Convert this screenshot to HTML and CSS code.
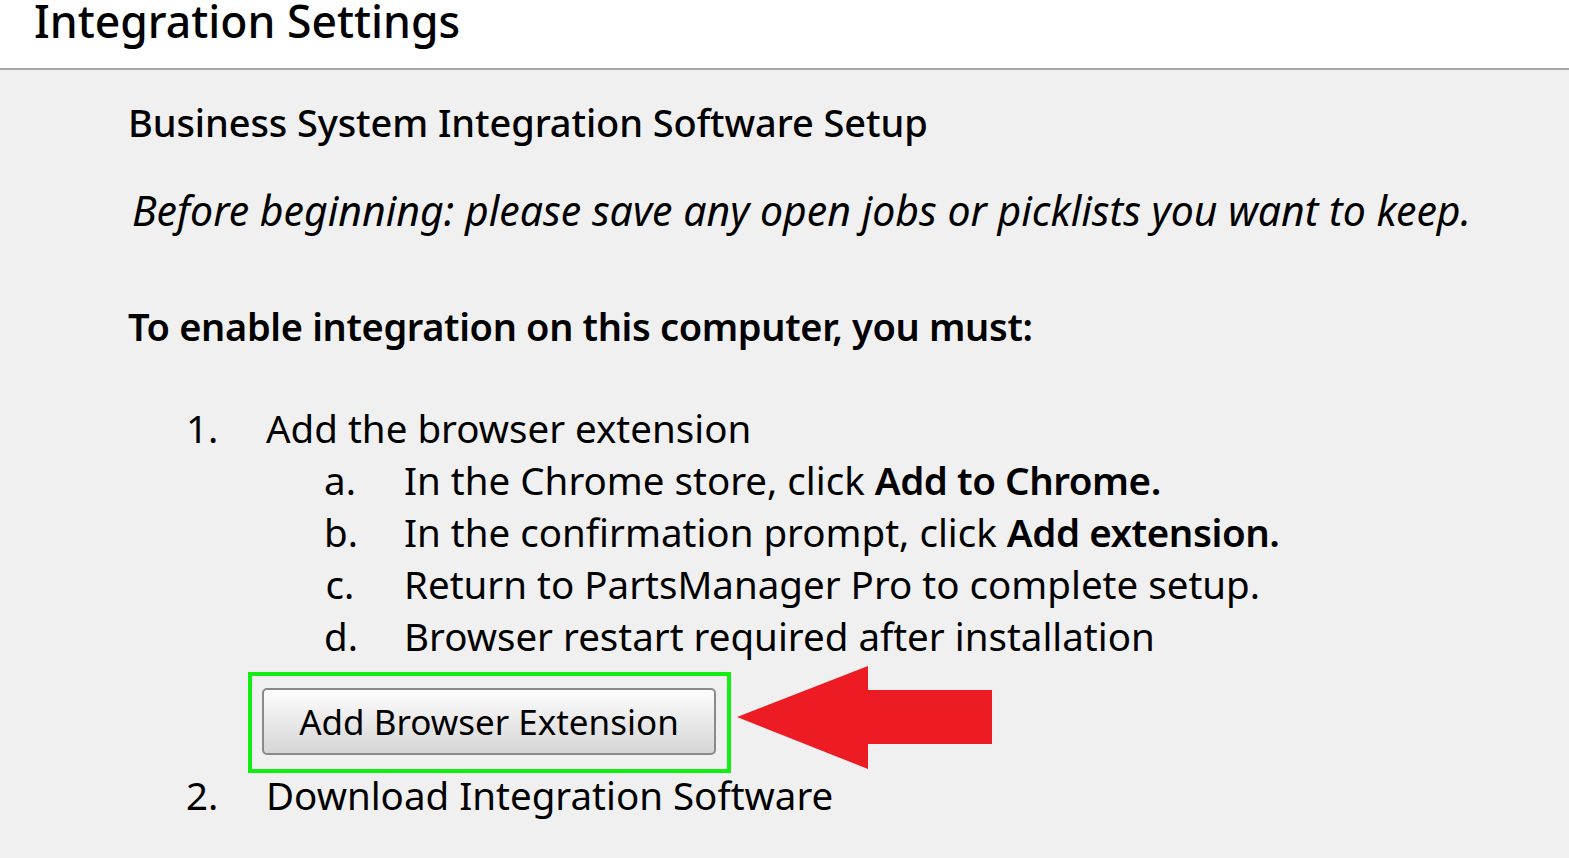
FILE: index.html
```html
<!DOCTYPE html>
<html>
<head>
<meta charset="utf-8">
<link rel="stylesheet" href="styles.css">
</head>
<body>
<header class="topbar"><h1 class="title">Integration Settings</h1></header>
<main class="content">
  <h2 class="section-title">Business System Integration Software Setup</h2>
  <p class="note">Before beginning: please save any open jobs or picklists you want to keep.</p>
  <p class="lead">To enable integration on this computer, you must:</p>
  <ol class="steps">
    <li class="step">
      <div class="row"><span class="num">1.</span><span>Add the browser extension</span></div>
      <ol class="substeps">
        <li class="row"><span class="let">a.</span><span>In the Chrome store, click <b>Add to Chrome.</b></span></li>
        <li class="row"><span class="let">b.</span><span>In the confirmation prompt, click <b>Add extension.</b></span></li>
        <li class="row"><span class="let">c.</span><span>Return to PartsManager Pro to complete setup.</span></li>
        <li class="row"><span class="let">d.</span><span>Browser restart required after installation</span></li>
      </ol>
      <div class="action">
        <div class="highlight"><button class="btn">Add Browser Extension</button></div>
        <svg class="arrow" width="258" height="106" viewBox="0 0 258 106"><polygon points="0,51 131,0 131,24 255,24 255,78 131,78 131,103" fill="#ed1c24"/></svg>
      </div>
    </li>
    <li class="step">
      <div class="row"><span class="num">2.</span><span>Download Integration Software</span></div>
    </li>
  </ol>
</main>
</body>
</html>
```
FILE: styles.css
```css
html, body { margin: 0; padding: 0; }
body {
  font-family: "Noto Sans", "Open Sans", sans-serif;
  background: #f0f0f0;
  color: #000;
  height: 858px;
  overflow: hidden;
}
.topbar {
  background: #fff;
  height: 70px;
  border-bottom: 2px solid #a8a6a6;
  box-sizing: border-box;
  padding-left: 34px;
  overflow: hidden;
}
.title {
  margin: 0;
  font-weight: 500;
  font-size: 44.5px;
  line-height: 44px;
  margin-top: -1px;
}
.content { padding-left: 128px; }
.section-title {
  margin: 0;
  padding-top: 26px;
  font-size: 38px;
  font-weight: 500;
  line-height: 52px;
  letter-spacing: -0.1px;
}
.note {
  margin: 0;
  padding-top: 36px;
  padding-left: 4px;
  font-style: italic;
  font-size: 41px;
  line-height: 52px;
  letter-spacing: 0;
}
.lead {
  margin: 0;
  padding-top: 64px;
  font-size: 38px;
  font-weight: 600;
  line-height: 52px;
  letter-spacing: -0.35px;
}
.steps {
  list-style: none;
  margin: 0;
  padding: 50px 0 0 58px;
}
.row {
  display: flex;
  font-size: 38.5px;
  line-height: 52px;
}
.num { width: 80px; }
.substeps {
  list-style: none;
  margin: 0;
  padding: 0 0 0 138px;
}
.let { width: 80px; text-align: center; padding-right: 48px; box-sizing: border-box; }
b { font-weight: 600; letter-spacing: -0.45px; }
.action {
  display: flex;
  align-items: center;
  margin-left: 62px;
  margin-top: 10px;
  margin-bottom: -4px;
}
.highlight {
  border: 4px solid #12ee12;
  padding: 12px 11px 14px 10px;
}
.btn {
  width: 454px;
  height: 67px;
  font-family: inherit;
  font-size: 35px;
  color: #000;
  border: 2px solid #8a8a8a;
  border-radius: 5px;
  background: linear-gradient(#fdfdfd, #d6d6d6);
  padding: 0;
}
.arrow { margin-left: 6px; margin-top: -7px; }
```
